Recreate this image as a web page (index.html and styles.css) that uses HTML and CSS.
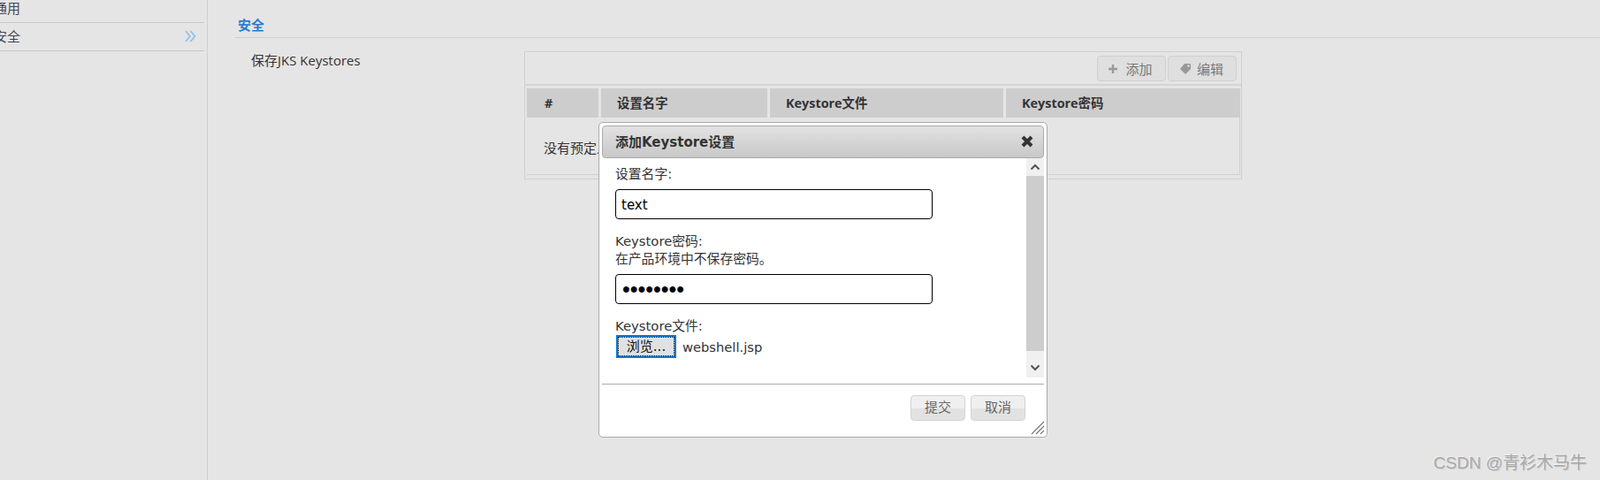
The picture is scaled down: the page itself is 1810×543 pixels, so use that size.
FILE: index.html
```html
<!DOCTYPE html>
<html lang="zh">
<head>
    <meta charset="UTF-8">
    <title>安全</title>
    <link rel="stylesheet" href="styles.css">
</head>
<body>
    <div class="page">
        <div class="sidebar">
            <ul class="side-menu">
                <li>通用</li>
                <li>安全
                    <svg class="side-arrow" width="13" height="14" viewBox="0 0 13 14"><path d="M1 1l5 6-5 6M6.500 1l5 6-5 6" fill="none" stroke="#8fc0e8" stroke-width="1.8"/></svg>
                </li>
            </ul>
        </div>
        <div class="main">
            <h2 class="section-title">安全</h2>
            <div class="form-row">
                <div class="form-label">保存JKS Keystores</div>
                <div class="grid-box">
                    <div class="toolbar">
                        <span class="tool-btn">
                            <svg width="10" height="10" viewBox="0 0 10 10"><path d="M5 0v10M0 5h10" stroke="#999" stroke-width="2.4"/></svg>
                            添加
                        </span>
                        <span class="tool-btn tool-edit">
                            <svg width="14" height="13" viewBox="0 0 14 13"><path d="M6 1h7v6l-6 6-6-6z" fill="#999"/><circle cx="10.500" cy="3.500" r="1.200" fill="#e2e2e2"/></svg>
                            编辑
                        </span>
                    </div>
                    <div class="grid-head">
                        <div>#</div>
                        <div>设置名字</div>
                        <div>Keystore文件</div>
                        <div>Keystore密码</div>
                    </div>
                    <div class="grid-body">没有预定义</div>
                </div>
            </div>
        </div>
    </div>

    <div class="dialog">
        <div class="dialog-title">
            <span>添加Keystore设置</span>
            <svg width="16" height="16" viewBox="0 0 16 16"><path d="M3 3l10 10M13 3L3 13" stroke="#333" stroke-width="4"/></svg>
        </div>
        <div class="dialog-scroll">
            <div class="dialog-fields">
                <label class="field-label">设置名字:</label>
                <input class="field-input" type="text" value="text">
                <label class="field-label field-gap">Keystore密码:<br>在产品环境中不保存密码。</label>
                <input class="field-input field-pass" type="password" value="password">
                <label class="field-label field-gap">Keystore文件:</label>
                <div class="file-row">
                    <span class="file-btn"><span class="file-btn-in">浏览...</span></span>
                    <span class="file-name">webshell.jsp</span>
                </div>
            </div>
            <div class="scrollbar">
                <div class="scroll-up"><svg width="12" height="8" viewBox="0 0 12 8"><path d="M1.500 6.500L6 2l4.500 4.500" fill="none" stroke="#555" stroke-width="2"/></svg></div>
                <div class="scroll-thumb"></div>
                <div class="scroll-down"><svg width="12" height="8" viewBox="0 0 12 8"><path d="M1.500 1.500L6 6l4.500-4.500" fill="none" stroke="#555" stroke-width="2"/></svg></div>
            </div>
        </div>
        <div class="dialog-foot">
            <span class="foot-btn">提交</span>
            <span class="foot-btn">取消</span>
        </div>
        <svg class="resize-grip" width="16" height="16" viewBox="0 0 16 16"><path d="M1 15L15 1M6 15l9-9M11 15l4-4" stroke="#777" stroke-width="1.200"/></svg>
    </div>

    <div class="watermark">CSDN @青衫木马牛</div>
</body>
</html>
```

FILE: styles.css
```css
html, body {
    margin: 0;
    padding: 0;
    height: 543px;
    overflow: hidden;
}
body {
    position: relative;
    background-color: #e5e5e5;
    color: #333;
    font-family: "Open Sans", "Noto Sans CJK SC", sans-serif;
    font-size: 15px;
}
.page {
    display: flex;
    height: 543px;
}

/* left menu, cut off by the screenshot */
.sidebar {
    flex: none;
    width: 234px;
    border-right: 1px solid #cfcfcf;
}
.side-menu {
    list-style: none;
    width: 231px;
    margin: -6px 0 0;
    padding: 0;
}
.side-menu li {
    display: flex;
    align-items: center;
    justify-content: space-between;
    height: 29px;
    margin-left: -7px;
    padding: 0 9px 2px 0;
    border-bottom: 1px solid #c8c8c8;
    color: #445;
    font-family: "Noto Sans CJK SC", sans-serif;
}
.side-arrow {
    margin-top: 1px;
}

.main {
    flex: 1;
    padding-left: 31px;
}
.section-title {
    margin: 0;
    height: 43px;
    padding: 20px 0 0 3px;
    box-sizing: border-box;
    border-bottom: 1px solid #cfcfcf;
    color: #2e7bcf;
    font-family: "Noto Sans CJK SC", sans-serif;
    font-size: 15px;
    font-weight: 700;
    line-height: 16px;
}
.form-row {
    display: flex;
    padding: 15px 0 0 18px;
}
.form-label {
    width: 309px;
    flex: none;
    line-height: 20px;
}

.grid-box {
    width: 810px;
    height: 143px;
    border: 1px solid #d0d0d0;
}
.toolbar {
    display: flex;
    justify-content: flex-end;
    gap: 2px;
    height: 38px;
    padding: 4px 5px 0 0;
    box-sizing: border-box;
    border-bottom: 2px solid #d4d4d4;
}
.tool-btn {
    display: flex;
    align-items: center;
    justify-content: center;
    gap: 9px;
    width: 78px;
    height: 29px;
    padding-right: 2px;
    box-sizing: border-box;
    border: 1px solid #d0d0d0;
    border-radius: 4px;
    background-color: #dfdfdf;
    color: #777;
}
.tool-edit {
    gap: 6px;
}
.grid-head {
    display: grid;
    grid-template-columns: 81px 188px 264px 265px;
    gap: 3px;
    margin: 3px 0 0 2px;
}
.grid-head div {
    height: 33px;
    padding-left: 18px;
    background-color: #cdcdcd;
    font-size: 14.4px;
    font-weight: 700;
    line-height: 33px;
}
.grid-head div:first-child {
    padding-left: 20px;
}
.grid-body {
    height: 65px;
    margin: 0 1px 0 2px;
    padding-left: 19px;
    box-sizing: border-box;
    border-bottom: 1px solid #d0d0d0;
    border-right: 1px solid #d0d0d0;
    line-height: 68px;
    white-space: nowrap;
}

/* keystore dialog */
.dialog {
    position: absolute;
    left: 677px;
    top: 138px;
    width: 500px;
    height: 349px;
    padding: 3px;
    border: 1px solid #aaa;
    border-radius: 5px;
    background-color: #fff;
    font-family: "DejaVu Sans", "Noto Sans CJK SC", sans-serif;
}
.dialog-title {
    display: flex;
    align-items: center;
    justify-content: space-between;
    height: 33px;
    padding: 0 10px 2px 14px;
    border: 1px solid #aaa;
    border-radius: 4px;
    background: linear-gradient(#e2e2e2, #c8c8c8);
    font-size: 15px;
    font-weight: 700;
}
.dialog-scroll {
    display: flex;
    justify-content: space-between;
    height: 248px;
}
.dialog-fields {
    padding: 8px 0 0 15px;
}
.field-label {
    display: block;
    color: #333;
    font-size: 14.8px;
    line-height: 20px;
}
.field-gap {
    margin-top: 15px;
}
.field-input {
    display: block;
    width: 359px;
    height: 34px;
    margin-top: 7px;
    padding: 2px 6px 0;
    box-sizing: border-box;
    border: 1px solid #000;
    border-radius: 4px;
    background-color: #fff;
    color: #000;
    font-family: "DejaVu Sans", sans-serif;
    font-size: 15px;
}
.field-pass {
    padding: 0 7px;
    font-family: "Liberation Sans", sans-serif;
    font-size: 25px;
}
.file-row {
    display: flex;
    align-items: center;
    gap: 7px;
    margin-left: 1px;
}
.file-btn {
    padding: 2px;
    background-color: #0078d7;
}
.file-btn-in {
    display: block;
    width: 62px;
    height: 20px;
    border: 1px dotted #000;
    background-color: #e1e1e1;
    color: #111;
    font-size: 15px;
    line-height: 21px;
    text-align: center;
}
.file-name {
    font-size: 14.7px;
}
.scrollbar {
    display: flex;
    flex-direction: column;
    width: 20px;
    background-color: #f0f0f0;
}
.scroll-up {
    display: flex;
    align-items: center;
    justify-content: center;
    height: 20px;
}
.scroll-thumb {
    flex: 1;
    background-color: #cdcdcd;
}
.scroll-down {
    display: flex;
    align-items: center;
    justify-content: center;
    height: 22px;
    padding-top: 8px;
}
.dialog-foot {
    display: flex;
    justify-content: flex-end;
    gap: 6px;
    margin-top: 7px;
    padding: 12px 21px 0 0;
    border-top: 1px solid #aaa;
}
.foot-btn {
    width: 60px;
    height: 27px;
    border: 1px solid #d3d3d3;
    border-radius: 4px;
    background: linear-gradient(#efefef 50%, #e2e2e2 50%);
    color: #666;
    font-size: 15px;
    line-height: 27px;
    text-align: center;
}
.resize-grip {
    position: absolute;
    right: 2px;
    bottom: 2px;
}

.watermark {
    position: absolute;
    right: 15px;
    top: 508px;
    color: #aaa;
    font-family: "Liberation Sans", "Noto Sans CJK SC", sans-serif;
    font-size: 19px;
    text-shadow: 1px 1px 0 rgba(0, 0, 0, 0.12), -1px -1px 0 rgba(255, 255, 255, 0.5);
}
```
